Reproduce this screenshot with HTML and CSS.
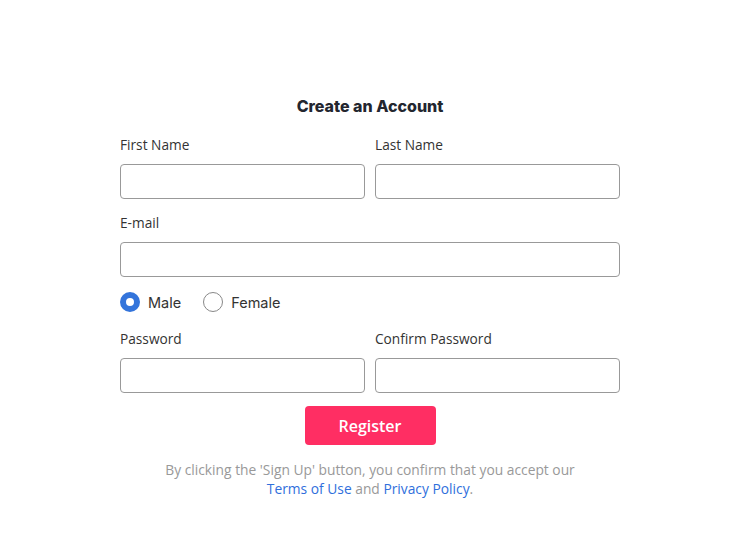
FILE: index.html
```html
<!DOCTYPE html>
<html>
<head>
<meta charset="utf-8">
<link rel="stylesheet" href="styles.css">
</head>
<body>
<form class="signup">
  <h1 class="title">Create an Account</h1>
  <div class="row two">
    <div class="field">
      <label class="label">First Name</label>
      <input class="input" type="text">
    </div>
    <div class="field">
      <label class="label">Last Name</label>
      <input class="input" type="text">
    </div>
  </div>
  <div class="row">
    <div class="field">
      <label class="label">E-mail</label>
      <input class="input" type="text">
    </div>
  </div>
  <div class="radios">
    <label class="radio"><span class="dot checked"></span>Male</label>
    <label class="radio"><span class="dot"></span>Female</label>
  </div>
  <div class="row two pw">
    <div class="field">
      <label class="label">Password</label>
      <input class="input" type="password">
    </div>
    <div class="field">
      <label class="label">Confirm Password</label>
      <input class="input" type="password">
    </div>
  </div>
  <div class="actions">
    <button type="button" class="btn">Register</button>
  </div>
  <p class="note">By clicking the 'Sign Up' button, you confirm that you accept our<br><a class="link">Terms of Use</a> and <a class="link">Privacy Policy</a>.</p>
</form>
</body>
</html>
```
FILE: styles.css
```css
* { box-sizing: border-box; }
html, body { margin: 0; padding: 0; background: #fff; }
body { font-family: "Open Sans", "Liberation Sans", sans-serif; color: #333; }
.signup {
  width: 500px;
  margin: 0 0 0 120px;
  padding-top: 94px;
  display: flex;
  flex-direction: column;
}
.title {
  margin: 0;
  font-family: "Inter", "Liberation Sans", sans-serif;
  font-weight: 800;
  font-size: 16px;
  line-height: 24px;
  text-align: center;
  color: #23262f;
}
.row { display: grid; grid-template-columns: 1fr; gap: 10px; margin-top: 18px; }
.row.two { grid-template-columns: 1fr 1fr; }
.row + .row { margin-top: 15px; }
.row.pw { margin-top: 18px; }
.field { display: flex; flex-direction: column; gap: 10px; }
.label { font-size: 13.7px; line-height: 18px; color: #333; }
.input {
  height: 35px;
  border: 1px solid #999;
  border-radius: 4px;
  background: #fff;
  width: 100%;
  margin: 0;
}
.radios { display: flex; gap: 22px; margin-top: 15px; height: 20px; align-items: center; }
.radio {
  display: flex; align-items: center; gap: 8px;
  font-family: "Inter", "Liberation Sans", sans-serif;
  font-size: 14.5px; color: #333;
}
.dot {
  width: 20px; height: 20px; border-radius: 50%;
  border: 1px solid #888; background: #fff;
}
.dot.checked { border: 6px solid #3374db; }
.actions { display: flex; justify-content: center; margin-top: 13px; }
.btn {
  width: 131px; height: 39px;
  border: none; border-radius: 4px;
  background: #ff2e63; color: #fff;
  font-family: "Open Sans", "Liberation Sans", sans-serif;
  font-weight: 600; font-size: 16px;
  padding: 0;
}
.note {
  margin: 15px 0 0;
  text-align: center;
  font-size: 13.8px;
  line-height: 19px;
  color: #999;
}
.link { color: #2f6fdc; text-decoration: none; }
```
